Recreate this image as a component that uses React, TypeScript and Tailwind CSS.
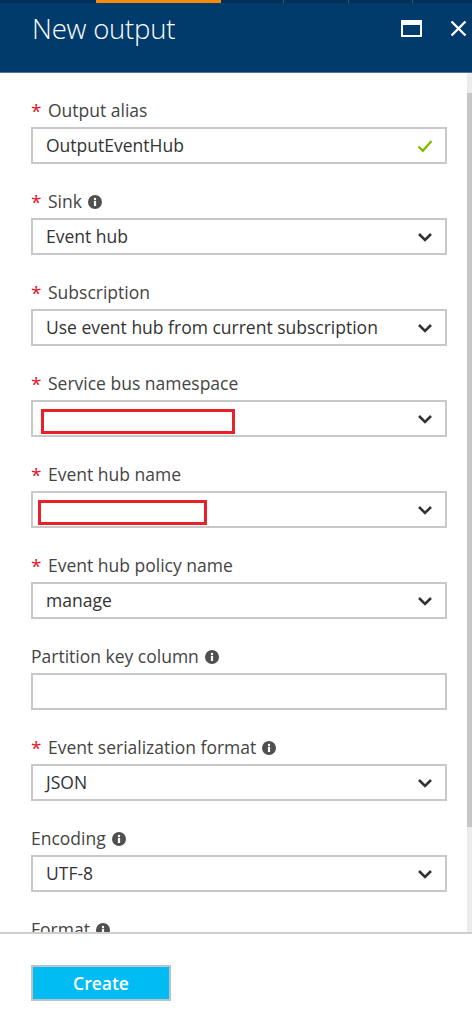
import React from 'react';

const FONT = { fontFamily: '"Open Sans", "Noto Sans", "Liberation Sans", sans-serif' };

type Field = {
  label: string;
  required?: boolean;
  info?: boolean;
  kind: 'text' | 'select';
  value?: string;
  valid?: boolean;
  redact?: number; // width of the red redaction box
  redactX?: number;
};

const FIELDS: Field[] = [
  { label: 'Output alias', required: true, kind: 'text', value: 'OutputEventHub', valid: true },
  { label: 'Sink', required: true, info: true, kind: 'select', value: 'Event hub' },
  { label: 'Subscription', required: true, kind: 'select', value: 'Use event hub from current subscription' },
  { label: 'Service bus namespace', required: true, kind: 'select', redact: 194, redactX: 8 },
  { label: 'Event hub name', required: true, kind: 'select', redact: 169, redactX: 5 },
  { label: 'Event hub policy name', required: true, kind: 'select', value: 'manage' },
  { label: 'Partition key column', info: true, kind: 'text' },
  { label: 'Event serialization format', required: true, info: true, kind: 'select', value: 'JSON' },
  { label: 'Encoding', info: true, kind: 'select', value: 'UTF-8' },
  // below the fold, only its label peeks out
  { label: 'Format', info: true, kind: 'select' },
];

function InfoIcon() {
  return (
    <svg width="14" height="14" viewBox="0 0 14 14" className="ml-[6px] mt-[1px] shrink-0">
      <circle cx="7" cy="7" r="7" fill="#505050" />
      <circle cx="7" cy="3.9" r="1.2" fill="#fff" />
      <rect x="5.9" y="5.8" width="2.2" height="5.2" fill="#fff" />
    </svg>
  );
}

function Chevron() {
  return (
    <svg width="16" height="10" viewBox="0 0 16 10" className="shrink-0">
      <path d="M2 2 L8 8 L14 2" fill="none" stroke="#333" strokeWidth="2.6" strokeLinejoin="miter" />
    </svg>
  );
}

function Check() {
  return (
    <svg width="16" height="14" viewBox="0 0 16 14" className="shrink-0">
      <path d="M1.5 7.5 L5.8 11.8 L14.5 2" fill="none" stroke="#7fba00" strokeWidth="2.2" />
    </svg>
  );
}

function FieldRow({ f }: { f: Field }) {
  return (
    <div className="mb-[25px]">
      <div className="flex items-center h-[24px] text-[17.5px] text-[#444]">
        {f.required && <span className="text-[#e81123] text-[19px] w-[17px] leading-none mt-[2px]">*</span>}
        <span>{f.label}</span>
        {f.info && <InfoIcon />}
      </div>
      <div className="mt-[5px] h-[37px] border-2 border-[#c8c8c8] bg-white flex items-center pl-[13px] pr-[12px] text-[17.5px] text-[#333]">
        <div className="flex-1 relative h-full flex items-center">
          {f.value && <span>{f.value}</span>}
          {f.redact && (
            <div
              className="absolute top-[7px] h-[25px] border-[3px] border-[#e8202a]"
              style={{ width: f.redact, left: (f.redactX ?? 8) - 13 }}
            />
          )}
        </div>
        {f.kind === 'select' && <Chevron />}
        {f.valid && <Check />}
      </div>
    </div>
  );
}

export default function App() {
  return (
    <div className="w-[472px] h-[1024px] flex flex-col bg-white overflow-hidden" style={FONT}>
      {/* header */}
      <div className="h-[73px] shrink-0 bg-[#003b6c] border-b border-[#4e7297] flex flex-col">
        <div className="h-[3px] bg-[#00305a] flex">
          <div className="w-[96px]" />
          <div className="w-[125px] bg-[#f7890b]" />
          <div className="w-[63px] border-r border-[#33557a]" />
          <div className="w-[65px] border-r border-[#33557a]" />
          <div className="w-[64px] border-r border-[#33557a]" />
        </div>
        <div className="flex items-center h-[50px] pl-[32px] pr-[5px]">
          <div className="flex-1 text-white text-[27.5px] font-light tracking-[-0.2px] mt-[2px]">New output</div>
          <div className="w-[21px] h-[17px] border-2 border-t-[5px] border-white mr-[28px]" />
          <svg width="17" height="17" viewBox="0 0 17 17">
            <path d="M1.5 1.5 L15.5 15.5 M15.5 1.5 L1.5 15.5" stroke="#fff" strokeWidth="2.4" />
          </svg>
        </div>
      </div>

      {/* scrolling body */}
      <div className="flex-1 flex min-h-0">
        <div className="flex-1 overflow-hidden pt-[25px] pl-[31px] pr-[20px]">
          {FIELDS.map((f) => (
            <FieldRow key={f.label} f={f} />
          ))}
        </div>
        <div className="w-[5px] bg-[#ececec] pt-[20px]">
          <div className="h-[734px] bg-[#c6c6c6]" />
        </div>
      </div>

      {/* footer */}
      <div className="h-[92px] shrink-0 border-t-2 border-[#cfcfcf] pt-[31px] pl-[31px]">
        <button className="w-[140px] h-[36px] bg-[#00bcf2] border-2 border-[#b8c4cc] text-white text-[17.5px] font-semibold">
          Create
        </button>
      </div>
    </div>
  );
}
